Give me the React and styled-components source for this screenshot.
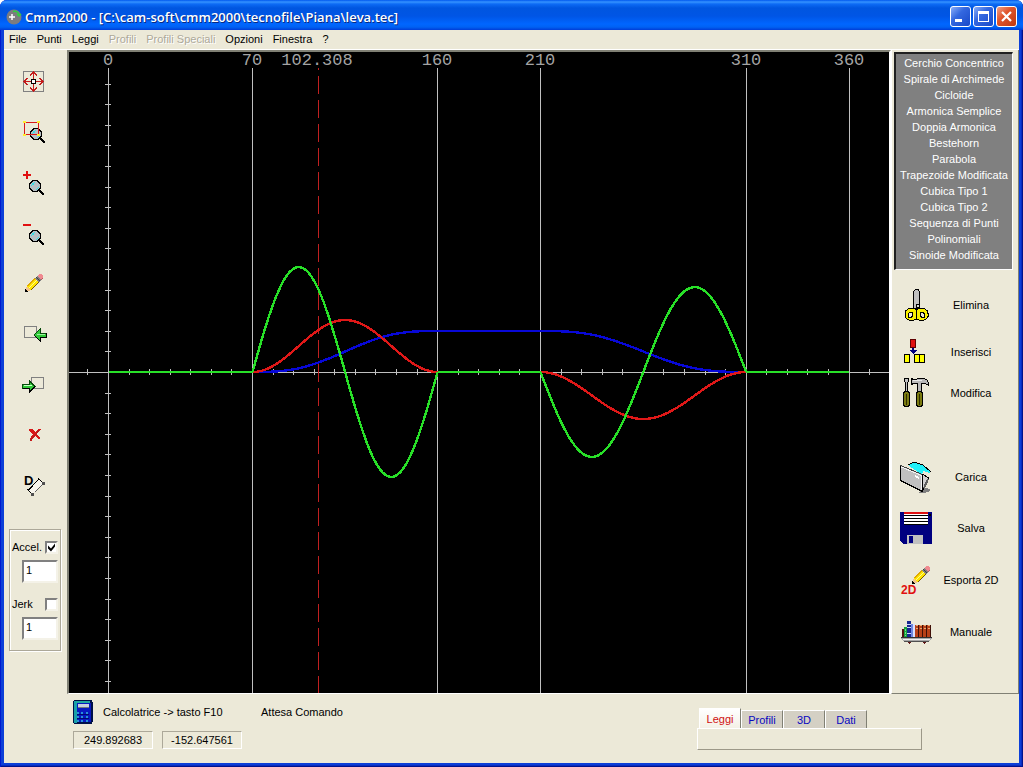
import React, { useState } from 'react'
import styled, { createGlobalStyle } from "styled-components";

const GlobalStyle = createGlobalStyle`
* {
    box-sizing: border-box;
}

body {
    margin: 0;
    background: #ffffff;
    font-family: "Liberation Sans", Arial, sans-serif;
    font-size: 11px;
    line-height: 14px;
    color: #000000;
}

button, input {
    font: inherit;
    color: inherit;
}

svg {
    display: block;
}
`;

const menu = [
    { label: "File" },
    { label: "Punti" },
    { label: "Leggi" },
    { label: "Profili", disabled: true },
    { label: "Profili Speciali", disabled: true },
    { label: "Opzioni" },
    { label: "Finestra" },
    { label: "?" },
]

const laws = [
    "Cerchio Concentrico",
    "Spirale di Archimede",
    "Cicloide",
    "Armonica Semplice",
    "Doppia Armonica",
    "Bestehorn",
    "Parabola",
    "Trapezoide Modificata",
    "Cubica Tipo 1",
    "Cubica Tipo 2",
    "Sequenza di Punti",
    "Polinomiali",
    "Sinoide Modificata",
]

/* ---------- icons ---------- */

const Icon = ({ children }) => (
    <svg width="32" height="32" viewBox="0 0 32 32" shapeRendering="crispEdges" aria-hidden="true">
        {children}
    </svg>
)

const Lens = ({ x, y }) => (
    <g>
        <path d={`M${x + 4} ${y + 4}l5 5`} stroke="#000" strokeWidth="2.4" />
        <circle cx={x} cy={y} r="5.5" fill="#b8c0c4" stroke="#000" strokeWidth="1.3" />
        <path d={`M${x - 4} ${y}l4 -4M${x - 3} ${y - 2}h2M${x + 1} ${y + 4}l3 -3`} stroke="#35dfe8" strokeWidth="1.3" />
    </g>
)

const Pencil = ({ x, y }) => (
    <g transform={`translate(${x} ${y})`}>
        <path d="M0 0l2 -5l4 4l-5 2z" fill="#f2c48c" />
        <path d="M0 1v-3l3 2v1z" fill="#000" />
        <path d="M2 -5l8 -8l4.500 4l-8.500 8.500z" fill="#ffe600" />
        <path d="M2.500 -5l7.500 -7.500" stroke="#e0a800" />
        <path d="M4 -3l8 -8" stroke="#fff890" />
        <path d="M6 -1l8 -8" stroke="#7a5600" strokeWidth="1.3" />
        <path d="M9.500 -12.500l2.500 -2.500l4 4l-2.500 2.500z" fill="#808080" />
        <path d="M11 -14l4 4" stroke="#404040" />
        <path d="M12 -15l2 -2h2l2 2v2l-2 2z" fill="#f08a90" />
        <path d="M18 -13l-2 2" stroke="#b85860" />
    </g>
)

const CenterIcon = () => (
    <Icon>
        <rect x="5.5" y="5.5" width="20" height="20" fill="none" stroke="#808080" />
        <path d="M15 6h1v19h-1zM6 15h19v1h-19z" fill="#c41c1c" />
        <path d="M12 9.500l3.500 -3.500l3.500 3.500M12 21.500l3.500 3.500l3.500 -3.500M9.500 12l-3.500 3.500l3.500 3.500M21.500 12l3.500 3.500l-3.500 3.500" fill="none" stroke="#c41c1c" />
        <rect x="13.5" y="13.5" width="4" height="4" fill="#fff" stroke="#000" />
    </Icon>
)

const ZoomWindowIcon = () => (
    <Icon>
        <Lens x={18} y={18} />
        <rect x="6.5" y="6.5" width="14" height="12" fill="none" stroke="#d81818" />
        <path d="M5 5h3v2h-3zM19 5h3v2h-3zM5 18h3v2h-3zM19 18h3v2h-3z" fill="#ffee30" />
    </Icon>
)

const ZoomInIcon = () => (
    <Icon>
        <path d="M5 8h3v-3h2v3h3v2h-3v3h-2v-3h-3z" fill="#e01010" />
        <Lens x={17} y={20} />
    </Icon>
)

const ZoomOutIcon = () => (
    <Icon>
        <path d="M5 8h8v2h-8z" fill="#e01010" />
        <Lens x={17} y={20} />
    </Icon>
)

const PencilIcon = () => <Icon><Pencil x={7} y={25} /></Icon>

const ImportIcon = () => (
    <Icon>
        <rect x="6.5" y="10.5" width="12" height="11" fill="none" stroke="#808080" />
        <path d="M16 19l6 -6v4h6v4h-6v4z" fill="#30c838" stroke="#064a0a" />
        <path d="M17 20l5 5v-4h6.500v-4" fill="none" stroke="#000" />
        <path d="M19 18.500h8" stroke="#9cf09c" />
    </Icon>
)

const ExportIcon = () => (
    <Icon>
        <rect x="13.5" y="11.5" width="12" height="11" fill="none" stroke="#808080" />
        <path d="M17 20.500l-6 -6v4h-6.500v4h6.500v4z" fill="#30c838" stroke="#064a0a" />
        <path d="M4.500 22.500h6.500v4l6 -6" fill="none" stroke="#000" />
        <path d="M6 19.500h8" stroke="#c8ffc8" />
    </Icon>
)

const DeleteIcon = () => (
    <Icon>
        <path d="M11 13h4l2 3l4 -3h2l-4 5l3 4v1h-1l-4 -3l-3 3v2h-2v-2l3 -5l-4 -3z" fill="#d81818" />
        <path d="M12 24.500l9 -10" stroke="#b02020" />
    </Icon>
)

const DistanceIcon = () => (
    <Icon>
        <text x="6" y="19" fontFamily="Liberation Sans, sans-serif" fontWeight="700" fontSize="13">D</text>
        <path d="M14 28l11 -11l-3 -4l-12 11z" fill="#f8f6ee" />
        <path d="M10 24.500l11 -11.500M9 23l5 5M20 12l5 5" stroke="#000" />
        <path d="M15 28l10 -10" stroke="#606060" strokeDasharray="2 1" />
        <path d="M13 27h3v3h-3zM24 16h3v3h-3z" fill="#505050" />
    </Icon>
)

const ScissorsIcon = () => (
    <Icon>
        <path d="M13.500 19V2.500l2 -2h2.500l1.500 2v16.500z" fill="#c0c0c0" stroke="#000" />
        <path d="M9 19.500h6l1.500 1.500l1.500 -1.500h6l3 2l1 3v3l-2 2.500l-3 1.500h-3l-3.500 -1.500l-3.500 1.500h-3l-3 -1.500l-2 -2.500v-3l1 -3z" fill="#f8f000" stroke="#000" />
        <path d="M16.500 20v10" stroke="#000" />
        <path d="M8.500 24.500l1.500 -1.500h2.500v4l-1 1h-3zM20.500 23.500h2.500l1.500 1.500v3h-3l-1 -1z" fill="#ece9d8" stroke="#000" />
        <rect x="16.5" y="15.5" width="3" height="3" fill="#d8d8d8" stroke="#000" />
    </Icon>
)

const InsertIcon = () => (
    <Icon>
        <rect x="10.5" y="3.5" width="5" height="8" fill="#e01010" stroke="#600000" />
        <path d="M12 12h2v2h3l-4 4l-4 -4h3z" fill="#000080" />
        <rect x="4.5" y="18.5" width="5" height="8" fill="#ffff00" stroke="#000" />
        <rect x="14.5" y="18.5" width="5" height="8" fill="#ffff00" stroke="#000" />
        <rect x="19.5" y="18.5" width="5" height="8" fill="#ffff00" stroke="#000" />
    </Icon>
)

const ToolsIcon = () => (
    <Icon>
        <path d="M4.500 1.500h4v3l-1 1v9h-2v-9l-1 -1z" fill="#c0c0c0" stroke="#000" />
        <path d="M4.500 14.500h4l1 2v11l-1 2h-4l-1 -2v-11z" fill="#7a7a10" stroke="#000" />
        <path d="M6.500 17v11" stroke="#303000" />
        <path d="M11.500 1.500l2 1h3l1 -1h6l3 1l2 3v3l-3 -2h-4v9h-4v-9h-4l-2 1z" fill="#b8b8b8" stroke="#000" />
        <path d="M13 3.500h9" stroke="#e8e8e8" />
        <path d="M17.500 14.500h4l1 2v11l-1 2h-4l-1 -2v-11z" fill="#7a7a10" stroke="#000" />
        <path d="M19.500 17v11" stroke="#303000" />
    </Icon>
)

const FolderIcon = () => (
    <Icon>
        <path d="M22 26l8 2v2l-5 2h-6z" fill="#808080" />
        <path d="M22 13l7 4l-6 12z" fill="#d0d0d0" stroke="#000" />
        <path d="M24 27l4 -9" stroke="#606060" strokeWidth="2" />
        <path d="M8 4l6 -3l9 3l8 7l-2 1l-6 -2l-1 4z" fill="#20f0f8" />
        <path d="M8 4l6 -3l9 3l8 7" fill="none" stroke="#000" />
        <path d="M0.500 4.500l22 9v17l-22 -11z" fill="#c0c0c0" />
        <path d="M1.500 6l20 8.500v14" fill="none" stroke="#f4f4f4" />
        <path d="M0.500 4.500v15l22 11v-17" fill="none" stroke="#000" strokeWidth="1.500" />
        <path d="M0.500 4.500l22 9" stroke="#404040" />
        <path d="M15 14l4 2v2l-4 -2z" fill="#fff" />
    </Icon>
)

const FloppyIcon = () => (
    <Icon>
        <path d="M0 0h32v32h-29l-3 -3z" fill="#000080" />
        <rect x="4" y="0" width="24" height="2" fill="#e01010" />
        <rect x="4" y="2" width="24" height="11" fill="#fff" />
        <path d="M4 3.500h24M4 6.500h24M4 9.500h24M4 12.500h24" stroke="#000" />
        <rect x="29" y="2" width="2" height="2" fill="#000" />
        <rect x="7" y="23" width="16" height="9" fill="#c0c0c0" />
        <rect x="9" y="24" width="4" height="7" fill="#000080" />
    </Icon>
)

const Export2DIcon = () => (
    <Icon>
        <Pencil x={12} y={19} />
        <text x="1" y="30" fontFamily="Liberation Sans, sans-serif" fontWeight="700" fontSize="12" fill="#e01010">2D</text>
    </Icon>
)

const BooksIcon = () => (
    <Icon>
        <rect x="2" y="13" width="3" height="8" fill="#501010" />
        <rect x="4" y="11" width="4" height="10" fill="#18a040" />
        <path d="M5.500 13v7" stroke="#70e080" strokeDasharray="2 1" />
        <rect x="7" y="5" width="4" height="16" fill="#182890" />
        <path d="M7 8.500h4M7 11.500h4M7 17.500h4" stroke="#d0d8f8" />
        <rect x="11" y="8" width="3" height="13" fill="#7088e0" />
        <rect x="13" y="8" width="2" height="13" fill="#d8e0ff" />
        <rect x="15" y="9" width="16" height="12" fill="#b84018" />
        <path d="M18.500 9v12M22.500 9v12M26.500 9v12M30.500 9v12" stroke="#401008" />
        <path d="M16 9.500h2M20 9.500h2M24 9.500h2M28 9.500h2M16 12.500h2M20 12.500h2M24 12.500h2M28 12.500h2" stroke="#e8a870" />
        <path d="M1 21h31v2l-3 2h-25l-3 -2z" fill="#a8a8a8" />
        <path d="M1 21.500h31" stroke="#303030" />
        <path d="M3 23.500h27" stroke="#f0f0f0" />
        <path d="M4 25.500h25" stroke="#505050" />
        <path d="M7 26h4l-2 2zM22 26h4l-2 2z" fill="#601818" />
    </Icon>
)

const CalculatorIcon = () => (
    <svg width="20" height="24" viewBox="0 0 20 24" shapeRendering="crispEdges" aria-hidden="true">
        <path d="M1 0h18v2h1v20h-1v2h-18l-1 -2v-20z" fill="#001048" />
        <rect x="1" y="1" width="3" height="22" fill="#18a0a8" />
        <rect x="3" y="1" width="14" height="2" fill="#20a8a0" />
        <rect x="4" y="3" width="14" height="19" fill="#0818c0" />
        <rect x="5" y="4" width="11" height="4" fill="#c8d0e0" />
        <path d="M5 7.500h11" stroke="#707880" />
        <path d="M4 12h2v2h-2zM8 12h2v2h-2zM13 12h2v2h-2zM4 16h2v2h-2zM8 16h2v2h-2zM13 16h2v2h-2zM4 20h2v2h-2zM8 20h2v2h-2zM13 20h2v2h-2z" fill="#2890d8" />
        <path d="M4 14.500h12M4 18.500h12" stroke="#000870" />
    </svg>
)

const LogoIcon = () => (
    <svg width="16" height="16" viewBox="0 0 16 16" aria-hidden="true">
        <circle cx="8" cy="8" r="7.500" fill="#7c7c80" />
        <path d="M3 8h6M6 5v6" stroke="#fff" strokeWidth="1.500" />
        <path d="M7 2.500c3 -1 6 1 6 4M11 5l2 2l2 -2" fill="none" stroke="#30d040" strokeWidth="1.500" />
    </svg>
)

/* ---------- diagram ---------- */

const X0 = 108.5
const Y0 = 372
const PX = 2.0570
const toX = (deg) => X0 + deg * PX

// cycloidal segment: t goes from 0 to 1 between two angles
const curve = (from, to, fn) => {
    let points = []
    for (let i = 0; i <= 60; i++) {
        const t = i / 60
        points.push(`${toX(from + (to - from) * t).toFixed(1)},${(Y0 - fn(t)).toFixed(1)}`)
    }
    return points.join(" ")
}

const cycloid = (t) => t - Math.sin(2 * Math.PI * t) / (2 * Math.PI)
const speed = (t) => (1 - Math.cos(2 * Math.PI * t)) / 2
const accel = (t) => Math.sin(2 * Math.PI * t)

const marks = [0, 70, 160, 210, 310, 360]

const Diagram = () => {
    const hTicks = []
    for (let d = -10; d <= 370; d += 10) hTicks.push(Math.round(toX(d) - 0.5) + 0.5)
    const vTicks = []
    for (let i = -14; i <= 15; i++) vTicks.push(Math.round(Y0 + i * 20.6) + 0.5)

    return (
        <svg width="100%" height="100%" viewBox="69 52 820 641" role="img" aria-label="Diagramma leva">
            <g stroke="#c0c0c0" shapeRendering="crispEdges">
                {marks.map((m) => {
                    const x = Math.round(toX(m) - 0.5) + 0.5
                    return <line key={m} x1={x} x2={x} y1="68" y2="693" />
                })}
                <line x1="69" x2="889" y1="372.5" y2="372.5" />
                {hTicks.map((x) => <line key={x} x1={x} x2={x} y1="369" y2="375" />)}
                {vTicks.map((y) => <line key={y} x1="105" x2="111" y1={y} y2={y} />)}
            </g>
            <line x1="318.5" x2="318.5" y1="68" y2="693" stroke="#c02020" strokeDasharray="18 6" strokeDashoffset="16" shapeRendering="crispEdges" />
            <g fill="none" strokeWidth="2.4" shapeRendering="crispEdges">
                <polyline stroke="#0808d8" points={curve(70, 160, (t) => 41 * cycloid(t))} />
                <polyline stroke="#0808d8" points={curve(160, 210, () => 41)} />
                <polyline stroke="#0808d8" points={curve(210, 310, (t) => 41 * (1 - cycloid(t)))} />
                <polyline stroke="#e01818" points={curve(70, 160, (t) => 52 * speed(t))} />
                <polyline stroke="#e01818" points={curve(210, 310, (t) => -47 * speed(t))} />
                <polyline stroke="#28e028" points={curve(0, 70, () => 0)} />
                <polyline stroke="#28e028" points={curve(70, 160, (t) => 105 * accel(t))} />
                <polyline stroke="#28e028" points={curve(160, 210, () => 0)} />
                <polyline stroke="#28e028" points={curve(210, 310, (t) => -85 * accel(t))} />
                <polyline stroke="#28e028" points={curve(310, 360, () => 0)} />
            </g>
            <g fill="#a4a4a4" fontFamily="Liberation Mono, monospace" fontSize="17" textAnchor="middle">
                {marks.map((m) => <text key={m} x={Math.floor(toX(m))} y="65">{m}</text>)}
                <text x="317" y="65">102.308</text>
            </g>
        </svg>
    )
}

const tools = [
    { name: "Centra", icon: CenterIcon },
    { name: "Zoom finestra", icon: ZoomWindowIcon },
    { name: "Zoom avanti", icon: ZoomInIcon },
    { name: "Zoom indietro", icon: ZoomOutIcon },
    { name: "Disegna", icon: PencilIcon },
    { name: "Importa", icon: ImportIcon },
    { name: "Esporta", icon: ExportIcon },
    { name: "Cancella", icon: DeleteIcon },
    { name: "Distanza", icon: DistanceIcon },
]

const editActions = [
    { label: "Elimina", icon: ScissorsIcon, height: 48 },
    { label: "Inserisci", icon: InsertIcon, height: 46 },
    { label: "Modifica", icon: ToolsIcon, height: 36 },
]

const fileActions = [
    { label: "Carica", icon: FolderIcon, height: 50 },
    { label: "Salva", icon: FloppyIcon, height: 52 },
    { label: "Esporta 2D", icon: Export2DIcon, height: 52 },
    { label: "Manuale", icon: BooksIcon, height: 52 },
]

const ActionList = ({ items }) => (
    <Actions>
        {items.map(({ label, icon: Glyph, height }) => (
            <Action key={label} $height={height}>
                <Glyph />
                <span>{label}</span>
            </Action>
        ))}
    </Actions>
)

const App = () => {
    const [tab, setTab] = useState("Leggi")
    const [accelOn, setAccelOn] = useState(true)
    const [jerkOn, setJerkOn] = useState(false)

    return (
        <Window>
            <GlobalStyle />
            <TitleBar>
                <LogoIcon />
                <h1>Cmm2000 - [C:\cam-soft\cmm2000\tecnofile\Piana\leva.tec]</h1>
                <WindowButton aria-label="Riduci">
                    <svg width="19" height="19" viewBox="0 0 19 19"><path d="M4 12h7v3h-7z" fill="#fff" /></svg>
                </WindowButton>
                <WindowButton aria-label="Ingrandisci">
                    <svg width="19" height="19" viewBox="0 0 19 19" shapeRendering="crispEdges">
                        <path d="M4 4h11v11h-11zM5 7v7h9v-7z" fill="#fff" fillRule="evenodd" />
                    </svg>
                </WindowButton>
                <WindowButton $close aria-label="Chiudi">
                    <svg width="19" height="19" viewBox="0 0 19 19"><path d="M5 5l9 9M14 5l-9 9" stroke="#fff" strokeWidth="2.200" /></svg>
                </WindowButton>
            </TitleBar>
            <MenuBar>
                {menu.map((m) => <MenuItem key={m.label} disabled={m.disabled}>{m.label}</MenuItem>)}
            </MenuBar>
            <Main>
                <ToolColumn>
                    {tools.map(({ name, icon: Glyph }) => (
                        <ToolButton key={name} aria-label={name}><Glyph /></ToolButton>
                    ))}
                    <ScaleBox>
                        <CheckRow>
                            <label htmlFor="accel">Accel.</label>
                            <CheckBox id="accel" type="checkbox" checked={accelOn} onChange={() => setAccelOn(!accelOn)} />
                        </CheckRow>
                        <ScaleInput aria-label="Scala Accel." defaultValue="1" />
                        <CheckRow>
                            <label htmlFor="jerk">Jerk</label>
                            <CheckBox id="jerk" type="checkbox" checked={jerkOn} onChange={() => setJerkOn(!jerkOn)} />
                        </CheckRow>
                        <ScaleInput aria-label="Scala Jerk" defaultValue="1" />
                    </ScaleBox>
                </ToolColumn>
                <Plot>
                    <Diagram />
                </Plot>
                <SidePanel>
                    <LawList>
                        {laws.map((law) => <li key={law}><button>{law}</button></li>)}
                    </LawList>
                    <ActionList items={editActions} />
                    <ActionList items={fileActions} />
                </SidePanel>
            </Main>
            <Footer>
                <Status>
                    <StatusRow>
                        <CalculatorIcon />
                        <Hint>Calcolatrice -&gt; tasto F10</Hint>
                        <span>Attesa Comando</span>
                    </StatusRow>
                    <Readouts>
                        <Readout>249.892683</Readout>
                        <Readout>-152.647561</Readout>
                    </Readouts>
                </Status>
                <Tabs>
                    <TabRow role="tablist">
                        {["Leggi", "Profili", "3D", "Dati"].map((t) => (
                            <Tab key={t} role="tab" aria-selected={t === tab} $active={t === tab} onClick={() => setTab(t)}>{t}</Tab>
                        ))}
                    </TabRow>
                    <TabPanel role="tabpanel" />
                </Tabs>
            </Footer>
        </Window>
    );
};

const Window = styled.div`
display: flex;
flex-direction: column;
min-height: 100vh;
padding: 0 4px 4px;
border-radius: 7px 7px 0 0;
overflow: hidden;
background: #0c3fd8;
box-shadow: inset 1px 0 #0019cf, inset -1px -1px #00138c, inset -2px -2px #0a2cc0;
`;

const TitleBar = styled.header`
display: flex;
align-items: center;
gap: 2px;
height: 30px;
margin: 0 -4px;
padding: 3px 6px 0;
background: linear-gradient(#0058ee 0, #3593ff 2px, #0d6bf5 4px, #0056e0 8px, #0055e5 16px, #0066ff 24px, #0062f4 27px, #003dd7 30px);

h1 {
    flex: 1;
    margin: 0 0 0 1px;
    font-family: "Open Sans", "Trebuchet MS", sans-serif;
    font-size: 13px;
    line-height: 20px;
    font-weight: 600;
    color: #ffffff;
    text-shadow: 1px 1px #0a2a80;
    white-space: nowrap;
}
`;

const WindowButton = styled.button`
width: 21px;
height: 21px;
padding: 0;
border: 1px solid #ffffff;
border-radius: 3px;
background: ${(p) => p.$close
        ? "linear-gradient(135deg, #f0a088 0, #e0552c 40%, #c03810 100%)"
        : "linear-gradient(135deg, #8aaef8 0, #3468e0 40%, #1848c8 100%)"};
`;

const MenuBar = styled.nav`
display: flex;
height: 20px;
padding: 0 0 2px;
background: #ece9d8;
border-bottom: 1px solid #ffffff;
`;

const MenuItem = styled.button`
padding: 0 5px;
border: 0;
background: none;
line-height: 16px;

&:disabled {
    color: #aca899;
    text-shadow: 1px 1px #ffffff;
}
`;

const Main = styled.main`
flex: 1;
display: flex;
background: #ece9d8;
`;

const ToolColumn = styled.div`
flex: none;
width: 63px;
padding: 7px 6px 0 5px;
`;

const ToolButton = styled.button`
display: flex;
align-items: center;
width: 100%;
height: 50px;
padding: 0 9px;
border: 0;
background: none;
`;

const ScaleBox = styled.div`
display: flex;
flex-direction: column;
margin-top: 22px;
padding: 10px 2px;
border: 1px solid #aca899;
box-shadow: 1px 1px #ffffff, inset 1px 1px #ffffff;
`;

const CheckRow = styled.div`
display: flex;
align-items: center;
justify-content: space-between;
height: 14px;
`;

const CheckBox = styled.input`
appearance: none;
width: 13px;
height: 13px;
margin: 0;
background: #ffffff;
border: 2px solid;
border-color: #808080 #f4f2e8 #f4f2e8 #808080;

&:checked::before {
    content: "";
    display: block;
    width: 9px;
    height: 9px;
    background: #000000;
    clip-path: polygon(1px 3px, 4px 6px, 8px 1px, 8px 4px, 4px 9px, 1px 6px);
}
`;

const ScaleInput = styled.input`
width: 36px;
height: 23px;
margin: 6px 0 14px;
padding: 0 2px 4px;
align-self: flex-end;
background: #ffffff;
border: 2px solid;
border-color: #808080 #f4f2e8 #f4f2e8 #808080;

&:last-child {
    margin-bottom: 0;
}
`;

const Plot = styled.section`
flex: 1;
min-width: 0;
background: #000000;
border: 2px solid;
border-color: #808074 #ffffff #ffffff #808074;
border-bottom-width: 1px;
`;

const SidePanel = styled.aside`
flex: none;
width: 128px;
padding: 2px 5px 0 2px;
border-left: 1px solid #ffffff;
border-right: 1px solid #808074;
border-bottom: 1px solid #808074;
`;

const LawList = styled.ul`
margin: 0 0 11px;
padding: 1px 0 6px;
list-style: none;
background: #808080;
border: 1px solid #ffffff;
border-top: 2px solid #202020;
border-left: 2px solid #202020;

button {
    display: block;
    width: 100%;
    padding: 0;
    border: 0;
    background: none;
    color: #ffffff;
    line-height: 16px;
    text-align: center;
    white-space: nowrap;
}
`;

const Actions = styled.div`
margin-bottom: 41px;

&:last-child {
    margin-bottom: 0;
}
`;

const Action = styled.button`
display: flex;
align-items: center;
width: 100%;
height: ${(p) => p.$height}px;
padding: 0 3px 0 6px;
border: 0;
background: none;

span {
    flex: 1;
    text-align: center;
    white-space: nowrap;
}
`;

const Footer = styled.footer`
display: flex;
justify-content: space-between;
height: 69px;
padding: 6px 97px 0 69px;
background: #ece9d8;
`;

const Status = styled.div`
display: flex;
flex-direction: column;
gap: 7px;
`;

const StatusRow = styled.div`
display: flex;
align-items: center;
height: 24px;
white-space: nowrap;
`;

const Hint = styled.span`
width: 158px;
margin-left: 10px;
`;

const Readouts = styled.div`
display: flex;
gap: 9px;
`;

const Readout = styled.output`
width: 80px;
height: 18px;
line-height: 16px;
text-align: center;
border: 1px solid;
border-color: #aca899 #ffffff #ffffff #aca899;
`;

const Tabs = styled.div`
width: 225px;
padding-top: 8px;
`;

const TabRow = styled.div`
display: flex;
align-items: flex-end;
height: 20px;
padding-left: 2px;
`;

const Tab = styled.button`
width: 42px;
height: ${(p) => p.$active ? 20 : 18}px;
padding: 0;
border: 1px solid #ffffff;
border-right: 1px solid #808074;
border-bottom: 0;
background: ${(p) => p.$active ? "linear-gradient(#ffffff, #f4f1e6)" : "#d4d0c4"};
color: ${(p) => p.$active ? "#d01010" : "#0808c0"};
`;

const TabPanel = styled.div`
height: 22px;
border: 1px solid;
border-color: #ffffff #9c9888 #9c9888 #ffffff;
`;

export default App
